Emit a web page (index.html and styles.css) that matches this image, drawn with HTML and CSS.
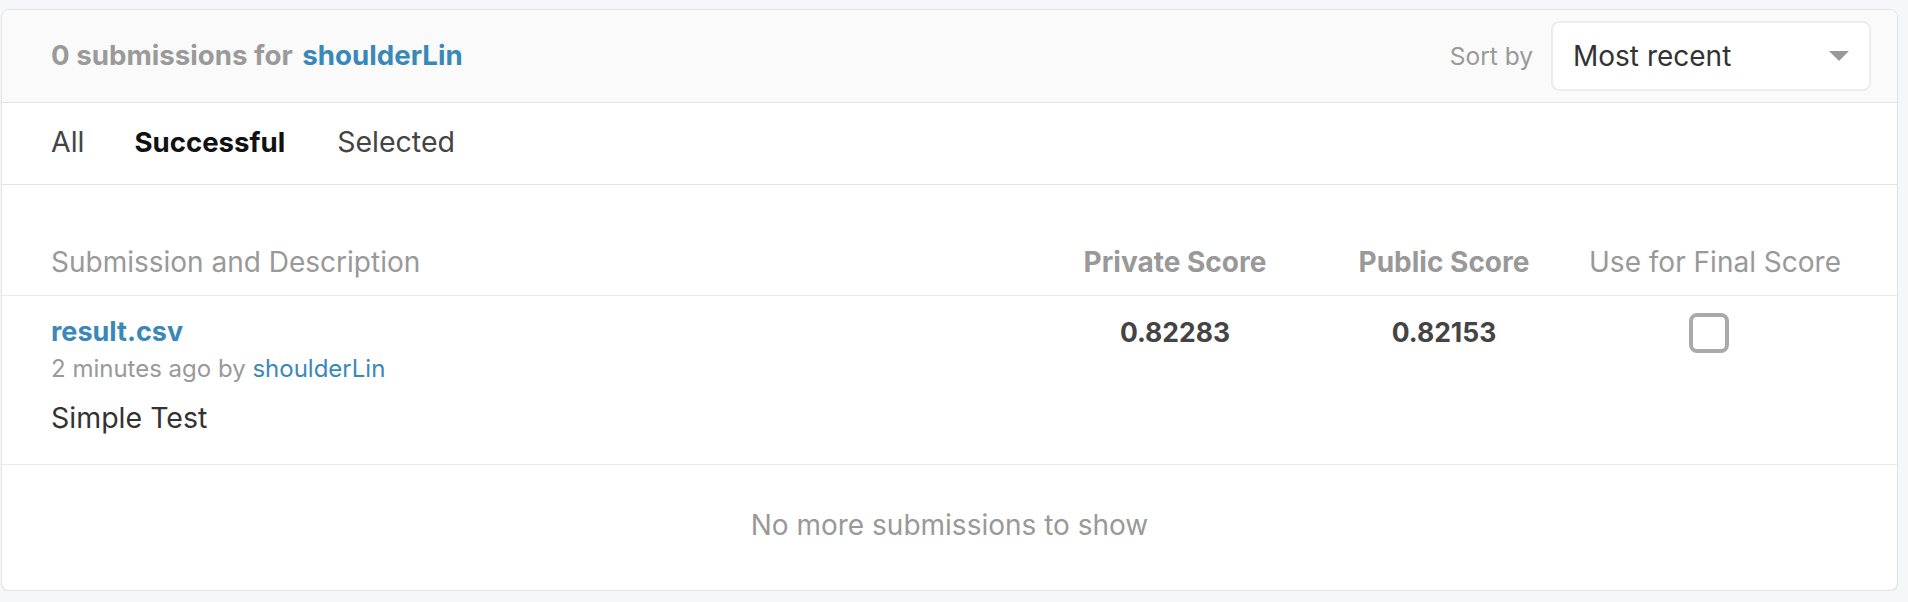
FILE: index.html
```html
<!DOCTYPE html>
<html lang="en">
<head>
<meta charset="utf-8">
<title>Submissions</title>
<link rel="stylesheet" href="styles.css">
</head>
<body>
<div class="card">
  <div class="card-header">
    <div class="title">0 submissions for <a class="user" href="#">shoulderLin</a></div>
    <div class="sort">
      <span class="sort-label">Sort by</span>
      <div class="select">
        <span class="select-value">Most recent</span>
        <span class="caret"></span>
      </div>
    </div>
  </div>
  <div class="tabs">
    <span class="tab">All</span>
    <span class="tab active">Successful</span>
    <span class="tab">Selected</span>
  </div>
  <div class="table">
    <div class="row head">
      <div class="cell c-desc">Submission and Description</div>
      <div class="cell c-num strong">Private Score</div>
      <div class="cell c-num strong">Public Score</div>
      <div class="cell c-num">Use for Final Score</div>
    </div>
    <div class="row data">
      <div class="cell c-desc">
        <a class="file" href="#">result.csv</a>
        <div class="meta">2 minutes ago by <a class="meta-user" href="#">shoulderLin</a></div>
        <div class="desc">Simple Test</div>
      </div>
      <div class="cell c-num score">0.82283</div>
      <div class="cell c-num score">0.82153</div>
      <div class="cell c-num"><span class="checkbox"></span></div>
    </div>
  </div>
  <div class="footer">No more submissions to show</div>
</div>
</body>
</html>
```
FILE: styles.css
```css
* { box-sizing: border-box; }
html, body { margin: 0; padding: 0; }
body {
  background: #f6f7f9;
  font-family: Inter, "Liberation Sans", sans-serif;
  color: #333;
}
a { text-decoration: none; }
.card {
  margin: 9px 10px 0 1px;
  background: #fff;
  border: 1px solid #e2e3e5;
  border-radius: 8px;
  box-shadow: 0 1px 1px rgba(0,0,0,0.06);
  overflow: hidden;
}
.card-header {
  height: 93px;
  background: #fafafa;
  border-bottom: 1px solid #e3e3e3;
  display: flex;
  align-items: center;
  justify-content: space-between;
  padding: 0 26px 0 49px;
}
.title {
  font-size: 27.7px;
  font-weight: 700;
  color: #9a9a9a;
  line-height: 40px;
  margin-top: -2px;
}
.user { color: #3a88b8; margin-left: 3px; }
.sort { display: flex; align-items: center; gap: 18px; }
.sort-label { font-size: 24.5px; color: #999; }
.select {
  width: 320px;
  height: 70px;
  background: #fff;
  border: 2px solid #ececec;
  border-radius: 8px;
  display: flex;
  align-items: center;
  justify-content: space-between;
  padding: 0 20px 0 20px;
}
.select-value { font-size: 28px; color: #333; }
.caret {
  width: 0; height: 0;
  border-left: 10px solid transparent;
  border-right: 10px solid transparent;
  border-top: 10px solid #999;
}
.tabs {
  height: 82px;
  border-bottom: 1px solid #e3e3e3;
  display: flex;
  align-items: center;
  padding: 0 0 4px 49px;
}
.tab { font-size: 28.5px; color: #444; line-height: 40px; margin-right: 52px; }
.tab:first-child { margin-right: 50px; }
.tab.active { font-weight: 700; color: #111; font-size: 27.6px; }
.row {
  display: grid;
  grid-template-columns: 1fr 306px 232px 310px;
  padding: 0 27px 0 49px;
  border-bottom: 1px solid #ececec;
}
.row.head {
  padding-top: 57px;
  padding-bottom: 13px;
}
.cell { font-size: 28px; line-height: 40px; color: #999; }
.c-num { text-align: center; }
.strong { font-weight: 700; }
.row.data { padding-top: 16px; padding-bottom: 26px; }
.file { font-size: 27px; font-weight: 700; color: #3a88b8; line-height: 40px; display: block; }
.meta { font-size: 24px; line-height: 34px; color: #999; }
.meta-user { color: #3a88b8; }
.desc { font-size: 28.5px; line-height: 40px; color: #333; margin-top: 12px; }
.score { font-weight: 700; color: #444; font-size: 26.5px; }
.checkbox {
  display: inline-block;
  width: 40px; height: 40px;
  border: 4px solid #aaa;
  border-radius: 8px;
  margin-top: 1px;
  margin-right: 12px;
  vertical-align: top;
}
.footer {
  text-align: center;
  font-size: 28px;
  line-height: 40px;
  color: #999;
  padding: 40px 0 45px;
}
```
